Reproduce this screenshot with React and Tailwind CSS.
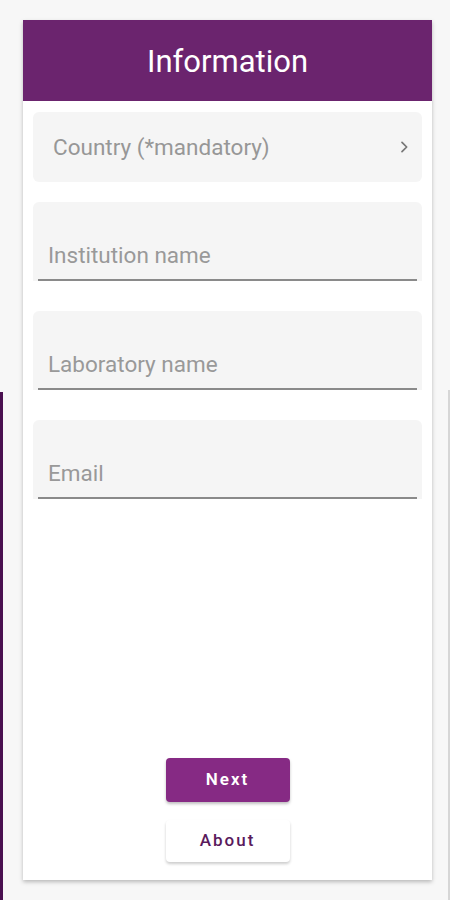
import React from "react";

const fields = ["Institution name", "Laboratory name", "Email"];

export default function App() {
  return (
    <div
      className="relative w-[450px] h-[900px] bg-[#f7f7f7] overflow-hidden"
      style={{ fontFamily: "Roboto, 'Noto Sans', sans-serif" }}
    >
      {/* background edges */}
      <div className="absolute left-0 top-[392px] bottom-0 w-[3px] bg-[#4a1050]" />
      <div className="absolute right-0 top-[390px] bottom-0 w-[2px] bg-[#d6d6d6]" />

      <div className="pt-5 px-[23px]">
        {/* CARD */}
        <div className="w-[409px] h-[860px] bg-white flex flex-col shadow-[0_2px_4px_rgba(0,0,0,0.25)]">
          {/* HEADER */}
          <div className="h-[81px] bg-[#6b246e] flex items-center justify-center pt-[2px]">
            <h1 className="text-white text-[31px] font-normal leading-none">Information</h1>
          </div>

          <div className="px-[10px] pt-[11px] flex flex-col">
            {/* COUNTRY */}
            <div className="h-[70px] bg-[#f5f5f5] rounded-md flex items-center justify-between pl-5 pr-[10px]">
              <span className="text-[22.5px] text-[#979797] pt-[1px]">Country (*mandatory)</span>
              <svg width="16" height="16" viewBox="0 0 24 24" fill="none" stroke="#777" strokeWidth="2.6" strokeLinecap="round" strokeLinejoin="round">
                <path d="M9 5l7 7-7 7" />
              </svg>
            </div>

            {/* FIELDS */}
            {fields.map((f) => (
              <div key={f} className="mt-5 mb-[10px] h-[79px] bg-[#f5f5f5] rounded-t-md flex flex-col justify-end px-[5px]">
                <span className="pl-[10px] pb-[10px] text-[22.5px] leading-[28px] text-[#999999]">{f}</span>
                <div className="h-[2px] bg-[#8a8a8a]" />
              </div>
            ))}
          </div>

          {/* BUTTONS */}
          <div className="mt-auto pb-[18px] flex flex-col items-center gap-[18px]">
            <button className="w-[124px] h-[44px] rounded bg-[#862a84] text-white text-[17px] font-semibold tracking-[2px] shadow-[0_2px_3px_rgba(0,0,0,0.25)]">
              Next
            </button>
            <button className="w-[124px] h-[42px] rounded bg-white text-[#5a1a5c] text-[17px] font-medium tracking-[2px] shadow-[0_2px_3px_rgba(0,0,0,0.2)]">
              About
            </button>
          </div>
        </div>
      </div>
    </div>
  );
}
